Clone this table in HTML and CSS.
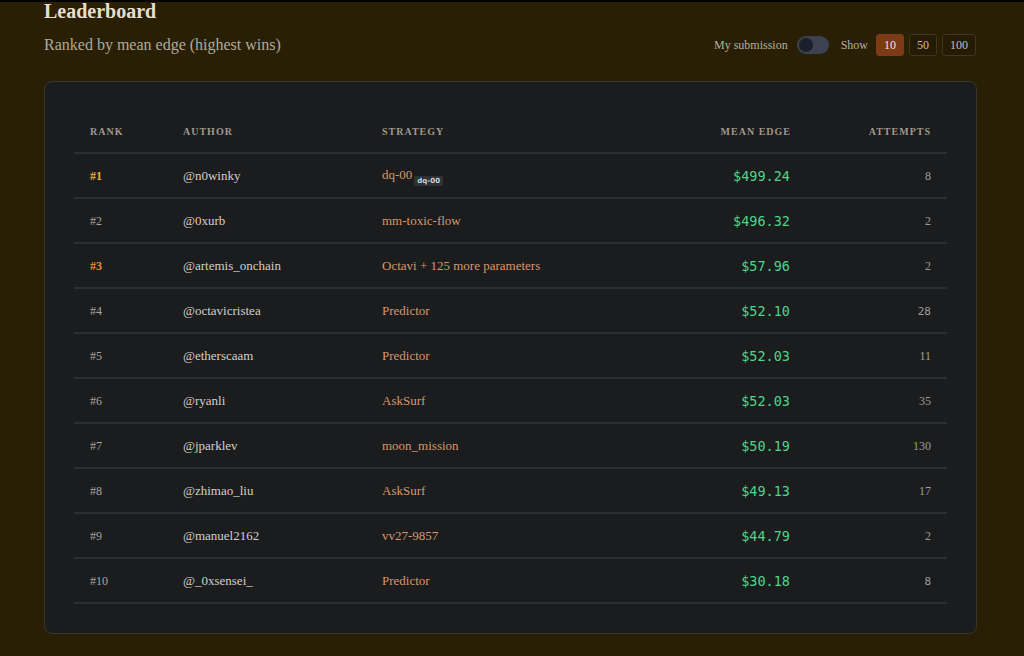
FILE: index.html
```html
<!DOCTYPE html>
<html>
<head>
<meta charset="utf-8">
<link rel="stylesheet" href="styles.css">
</head>
<body>
<div class="page">
  <h1 class="title">Leaderboard</h1>
  <div class="bar">
    <p class="subtitle">Ranked by mean edge (highest wins)</p>
    <div class="controls">
      <span class="label">My submission</span>
      <span class="toggle"><span class="knob"></span></span>
      <span class="label show">Show</span>
      <span class="btn active">10</span>
      <span class="btn">50</span>
      <span class="btn">100</span>
    </div>
  </div>
  <div class="card">
    <table class="board">
      <colgroup>
        <col class="c-rank"><col class="c-author"><col class="c-strat"><col class="c-edge"><col class="c-att">
      </colgroup>
      <thead>
        <tr><th>Rank</th><th>Author</th><th>Strategy</th><th class="r">Mean Edge</th><th class="r">Attempts</th></tr>
      </thead>
      <tbody>
        <tr><td class="rank gold">#1</td><td class="author">@n0winky</td><td class="strat">dq-00<span class="tag">dq-00</span></td><td class="edge">$499.24</td><td class="att">8</td></tr>
        <tr><td class="rank">#2</td><td class="author">@0xurb</td><td class="strat">mm-toxic-flow</td><td class="edge">$496.32</td><td class="att">2</td></tr>
        <tr><td class="rank bronze">#3</td><td class="author">@artemis_onchain</td><td class="strat">Octavi + 125 more parameters</td><td class="edge">$57.96</td><td class="att">2</td></tr>
        <tr><td class="rank">#4</td><td class="author">@octavicristea</td><td class="strat">Predictor</td><td class="edge">$52.10</td><td class="att mono">28</td></tr>
        <tr><td class="rank">#5</td><td class="author">@etherscaam</td><td class="strat">Predictor</td><td class="edge">$52.03</td><td class="att">11</td></tr>
        <tr><td class="rank">#6</td><td class="author">@ryanli</td><td class="strat">AskSurf</td><td class="edge">$52.03</td><td class="att">35</td></tr>
        <tr><td class="rank">#7</td><td class="author">@jparklev</td><td class="strat">moon_mission</td><td class="edge">$50.19</td><td class="att">130</td></tr>
        <tr><td class="rank">#8</td><td class="author">@zhimao_liu</td><td class="strat">AskSurf</td><td class="edge">$49.13</td><td class="att">17</td></tr>
        <tr><td class="rank">#9</td><td class="author">@manuel2162</td><td class="strat">vv27-9857</td><td class="edge">$44.79</td><td class="att">2</td></tr>
        <tr><td class="rank">#10</td><td class="author">@_0xsensei_</td><td class="strat">Predictor</td><td class="edge">$30.18</td><td class="att mono">8</td></tr>
      </tbody>
    </table>
  </div>
</div>
</body>
</html>
```
FILE: styles.css
```css
html, body {
  margin: 0;
  padding: 0;
  background: #291f04;
  height: 100%;
  overflow: hidden;
}
body {
  border-top: 2px solid #050402;
  font-family: "Liberation Serif", "DejaVu Serif", serif;
}
.page {
  padding: 0 48px 0 44px;
}
.title {
  margin: -4px 0 0 0;
  font-size: 20px;
  line-height: 26px;
  font-weight: bold;
  color: #e6ded0;
}
.bar {
  display: flex;
  justify-content: space-between;
  align-items: center;
  margin-top: 9px;
  height: 24px;
}
.subtitle {
  margin: 0;
  font-size: 16px;
  color: #b3aa99;
}
.controls {
  display: flex;
  align-items: center;
}
.label {
  font-size: 12px;
  color: #b8ae9c;
}
.toggle {
  display: inline-flex;
  align-items: center;
  width: 32px;
  height: 18px;
  border-radius: 9px;
  background: #3c4250;
  margin-left: 9px;
  padding: 0 2px;
  box-sizing: border-box;
}
.knob {
  width: 14px;
  height: 14px;
  border-radius: 50%;
  background: #1b1f2a;
}
.show {
  margin-left: 12px;
  margin-right: 8px;
}
.btn {
  display: inline-flex;
  align-items: center;
  justify-content: center;
  height: 20px;
  padding: 0 7px;
  border: 1px solid #3e361f;
  border-radius: 3px;
  font-size: 12px;
  color: #c9bfae;
  background: #241b05;
  margin-left: 5px;
}
.btn.active {
  background: #7c3b15;
  border-color: #7c3b15;
  color: #f2e4d4;
  margin-left: 0;
}
.card {
  margin-top: 24px;
  width: 933px;
  box-sizing: border-box;
  background: #1b1c1e;
  border: 1px solid #38362c;
  border-radius: 8px;
  padding: 29px 29px 29px 29px;
}
.board {
  width: 873px;
  border-collapse: collapse;
  table-layout: fixed;
}
.c-rank { width: 93px; }
.c-author { width: 199px; }
.c-strat { width: 291px; }
.c-edge { width: 150px; }
.c-att { width: 140px; }
th {
  text-align: left;
  font-size: 10px;
  font-weight: bold;
  letter-spacing: 1px;
  text-transform: uppercase;
  color: #9f998f;
  padding: 0 16px;
  height: 41px;
  border-bottom: 2px solid #2c2e31;
}
th.r { text-align: right; }
td {
  padding: 1px 16px 0 16px;
  height: 42px;
  border-bottom: 2px solid #2c2e31;
  font-size: 13px;
  white-space: nowrap;
}
.rank { color: #a8a39b; font-size: 12px; }
.rank.gold { color: #f2b233; font-weight: bold; }
.rank.bronze { color: #e98b34; font-weight: bold; }
.author { color: #d4cfc6; }
.strat { color: #d8976a; }
.tag {
  display: inline-block;
  vertical-align: -4px;
  margin-left: 2px;
  padding: 0 3px;
  background: #2f3032;
  color: #d2d2d2;
  font-family: "DejaVu Sans", sans-serif;
  font-size: 7px;
  font-weight: bold;
  line-height: 10px;
}
.edge {
  text-align: right;
  padding-right: 17px;
  font-family: "DejaVu Sans Mono", monospace;
  font-size: 13.5px;
  color: #4fd58a;
}
.att {
  text-align: right;
  color: #a09c96;
  font-size: 12px;
}
.att.mono {
  font-family: "DejaVu Sans Mono", monospace;
  font-size: 11px;
}
```
